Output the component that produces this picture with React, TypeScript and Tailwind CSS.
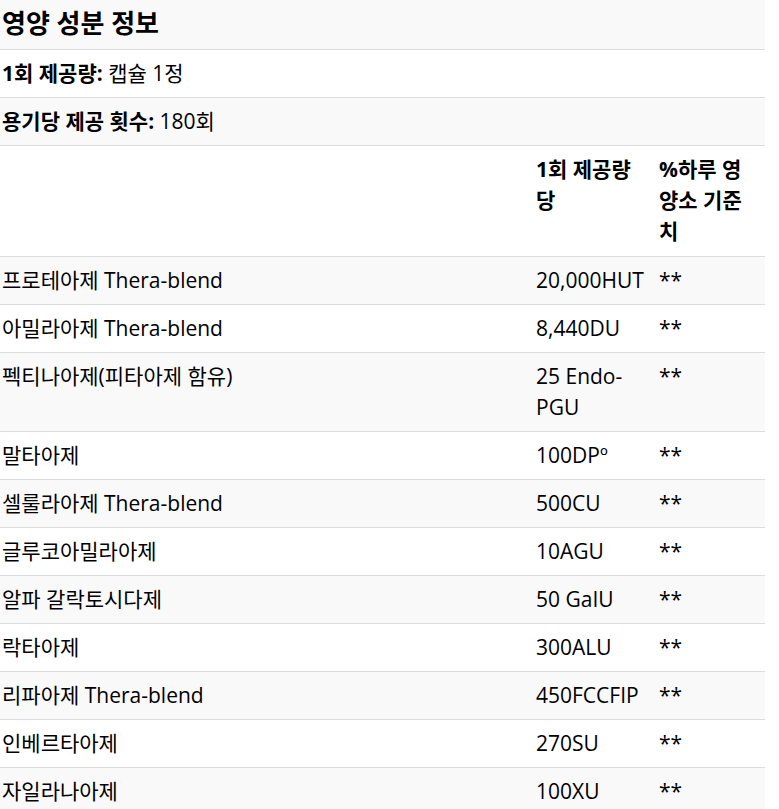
import React from 'react';

const rows: Array<[string, string]> = [
  ['프로테아제 Thera-blend', '20,000HUT'],
  ['아밀라아제 Thera-blend', '8,440DU'],
  ['펙티나아제(피타아제 함유)', '25 Endo-PGU'],
  ['말타아제', '100DPº'],
  ['셀룰라아제 Thera-blend', '500CU'],
  ['글루코아밀라아제', '10AGU'],
  ['알파 갈락토시다제', '50 GaIU'],
  ['락타아제', '300ALU'],
  ['리파아제 Thera-blend', '450FCCFIP'],
  ['인베르타아제', '270SU'],
  ['자일라나아제', '100XU'],
];

const App: React.FC = () => {
  // striped rows continue from the header rows, so first item row is gray
  return (
    <div
      className="bg-white text-black"
      style={{ fontFamily: '"Open Sans", "Noto Sans CJK KR", sans-serif' }}
    >
      <table className="w-[765px] table-fixed border-collapse text-[21px] leading-[31px]">
        <colgroup>
          <col className="w-[534px]" />
          <col className="w-[123px]" />
          <col className="w-[108px]" />
        </colgroup>
        <tbody>
          <tr className="bg-[#f9f9f9]">
            <td colSpan={3} className="px-[2px] pt-[7px] pb-[9px] text-[26px] font-bold leading-[33px]">
              영양 성분 정보
            </td>
          </tr>
          <tr className="border-t border-[#ddd] bg-white">
            <td colSpan={3} className="px-[2px] py-2 align-top">
              <b>1회 제공량:</b> 캡슐 1정
            </td>
          </tr>
          <tr className="border-t border-[#ddd] bg-[#f9f9f9]">
            <td colSpan={3} className="px-[2px] py-2 align-top">
              <b>용기당 제공 횟수:</b> 180회
            </td>
          </tr>
          <tr className="border-t border-[#ddd] bg-white">
            <th className="px-[2px] pt-2 pb-[9px] text-left align-top font-bold"></th>
            <th className="pl-[2px] pr-[8px] pt-2 pb-[9px] text-left align-top font-bold">1회 제공량 당</th>
            <th className="pl-[2px] pr-[14px] pt-2 pb-[9px] text-left align-top font-bold">%하루 영양소 기준치</th>
          </tr>
          {rows.map(([name, amount], idx) => (
            <tr
              key={name}
              className={`border-t border-[#ddd] ${idx % 2 === 0 ? 'bg-[#f9f9f9]' : 'bg-white'}`}
            >
              <td className="px-[2px] py-2 align-top">{name}</td>
              <td className="px-[2px] py-2 align-top">{amount}</td>
              <td className="px-[2px] py-2 align-top">**</td>
            </tr>
          ))}
        </tbody>
      </table>
    </div>
  );
};

export default App;
